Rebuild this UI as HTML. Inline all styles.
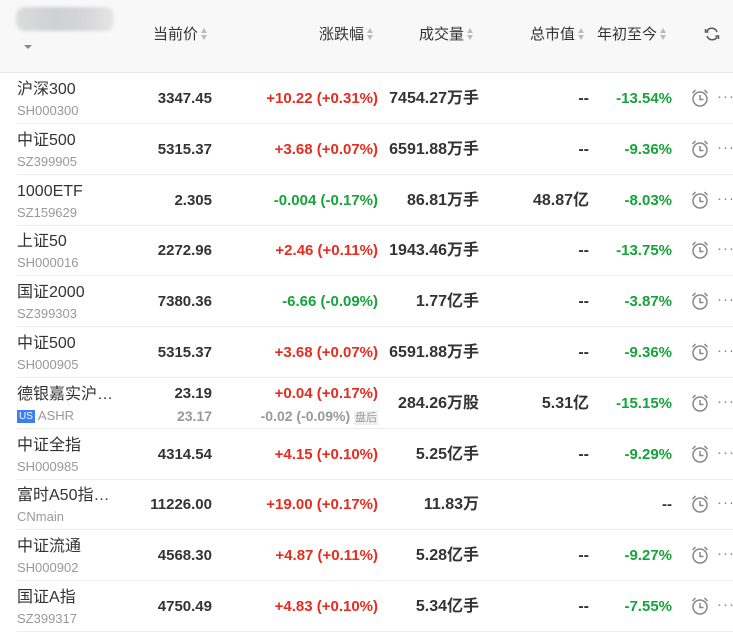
<!DOCTYPE html>
<html><head><meta charset="utf-8"><style>
*{margin:0;padding:0;box-sizing:border-box}
body{width:733px;height:637px;background:#fff;font-family:"Liberation Sans","Noto Sans CJK SC",sans-serif;position:relative;overflow:hidden;color:#333}
.hdr{position:absolute;left:0;top:0;width:733px;height:73px;background:#f8f8f8;border-bottom:1px solid #e8e8e8}
.h{position:absolute;top:25px;font-size:15px;line-height:20px;color:#333;white-space:nowrap}
.s{display:inline-block;width:7px;height:14px;vertical-align:-2px;margin-left:3px;position:relative}
.s:before,.s:after{content:"";position:absolute;left:0;border-left:3.5px solid transparent;border-right:3.5px solid transparent}
.s:before{top:1px;border-bottom:5px solid #bbb}
.s:after{top:8px;border-top:5px solid #bbb}
.row{position:absolute;left:17px;width:716px;height:51px;border-bottom:1px solid #ececec}
.nm{position:absolute;left:0;top:7px;font-size:16px;line-height:20px;height:20px;color:#333;white-space:nowrap}
.cd{position:absolute;left:0;top:30px;font-size:13px;line-height:16px;color:#999;white-space:nowrap}
.v{position:absolute;top:16px;font-size:15px;line-height:20px;height:20px;font-weight:bold;text-align:right;white-space:nowrap;color:#333}
.r{color:#e62c1f}.g{color:#15a33a}
.al{position:absolute;left:673px;top:15px}
.dt{position:absolute;left:700px;top:14px;font-size:15px;line-height:20px;color:#888;letter-spacing:1px}
</style></head><body>
<div class="hdr">
<div style="position:absolute;left:16px;top:7px;width:98px;height:24px;border-radius:9px;background:linear-gradient(90deg,#dcdcdc,#cfd0d3 40%,#d6d6d8 70%,#e6e6e6);filter:blur(1.5px)"></div>
<div style="position:absolute;left:24px;top:45px;border-left:4px solid transparent;border-right:4px solid transparent;border-top:4px solid #888"></div>
<div class="h" style="left:153px">当前价<span class="s"></span></div>
<div class="h" style="left:319px">涨跌幅<span class="s"></span></div>
<div class="h" style="left:419px">成交量<span class="s"></span></div>
<div class="h" style="left:530px">总市值<span class="s"></span></div>
<div class="h" style="left:597px">年初至今<span class="s"></span></div>
<svg style="position:absolute;left:704px;top:26px" width="16" height="16" viewBox="0 0 16 16" fill="none" stroke="#555" stroke-width="1.5"><path d="M13 6A5.5 5.5 0 0 0 3 5"/><path d="M3 10a5.5 5.5 0 0 0 10 1"/><path d="M1.5 3v3h3M14.5 13v-3h-3"/></svg>
</div>
<div id="rows"></div>
<script>
var d=[
["沪深300","SH000300","3347.45","+10.22 (+0.31%)","r","7454.27万手","--","-13.54%"],
["中证500","SZ399905","5315.37","+3.68 (+0.07%)","r","6591.88万手","--","-9.36%"],
["1000ETF","SZ159629","2.305","-0.004 (-0.17%)","g","86.81万手","48.87亿","-8.03%"],
["上证50","SH000016","2272.96","+2.46 (+0.11%)","r","1943.46万手","--","-13.75%"],
["国证2000","SZ399303","7380.36","-6.66 (-0.09%)","g","1.77亿手","--","-3.87%"],
["中证500","SH000905","5315.37","+3.68 (+0.07%)","r","6591.88万手","--","-9.36%"],
["德银嘉实沪…","ASHR","23.19","+0.04 (+0.17%)","r","284.26万股","5.31亿","-15.15%"],
["中证全指","SH000985","4314.54","+4.15 (+0.10%)","r","5.25亿手","--","-9.29%"],
["富时A50指…","CNmain","11226.00","+19.00 (+0.17%)","r","11.83万","","--"],
["中证流通","SH000902","4568.30","+4.87 (+0.11%)","r","5.28亿手","--","-9.27%"],
["国证A指","SZ399317","4750.49","+4.83 (+0.10%)","r","5.34亿手","--","-7.55%"]];
var h="",alarm='<svg class="al" width="20" height="20" viewBox="0 0 20 20" fill="none" stroke="#888" stroke-width="1.5"><circle cx="10" cy="11" r="7"/><path d="M10 7v4.5h3.5M2.5 5l3-3M17.5 5l-3-3"/></svg>';
d.forEach(function(r,i){
var t=73+i*50.8,sp=i==6;
h+='<div class="row" style="top:'+t+'px">';
h+='<div class="nm">'+r[0]+'</div>';
h+='<div class="cd">'+(sp?'<span style="display:inline-block;background:#3d7ef0;color:#fff;font-size:10px;line-height:13px;padding:0 2px;margin-right:3px;vertical-align:1px">US</span>':'')+r[1]+'</div>';
var ty=sp?6:16;
h+='<div class="v" style="right:521px;top:'+ty+'px">'+r[2]+'</div>';
h+='<div class="v '+r[4]+'" style="right:355px;top:'+ty+'px">'+r[3]+'</div>';
if(sp){h+='<div class="v" style="right:521px;top:28px;font-size:14px;color:#999">23.17</div><div class="v" style="right:355px;top:28px;font-size:14px;color:#999">-0.02 (-0.09%) <span style="background:#f0f0f0;font-size:11px;font-weight:normal;padding:1px">盘后</span></div>';}
h+='<div class="v" style="right:254px;font-size:16px">'+r[5]+'</div>';
h+='<div class="v" style="right:144px;font-size:16px">'+r[6]+'</div>';
h+='<div class="v '+(r[7]=="--"?'':'g')+'" style="right:61px">'+r[7]+'</div>';
h+=alarm+'<div class="dt">···</div></div>';
});
document.getElementById("rows").innerHTML=h;
</script>
</body></html>
